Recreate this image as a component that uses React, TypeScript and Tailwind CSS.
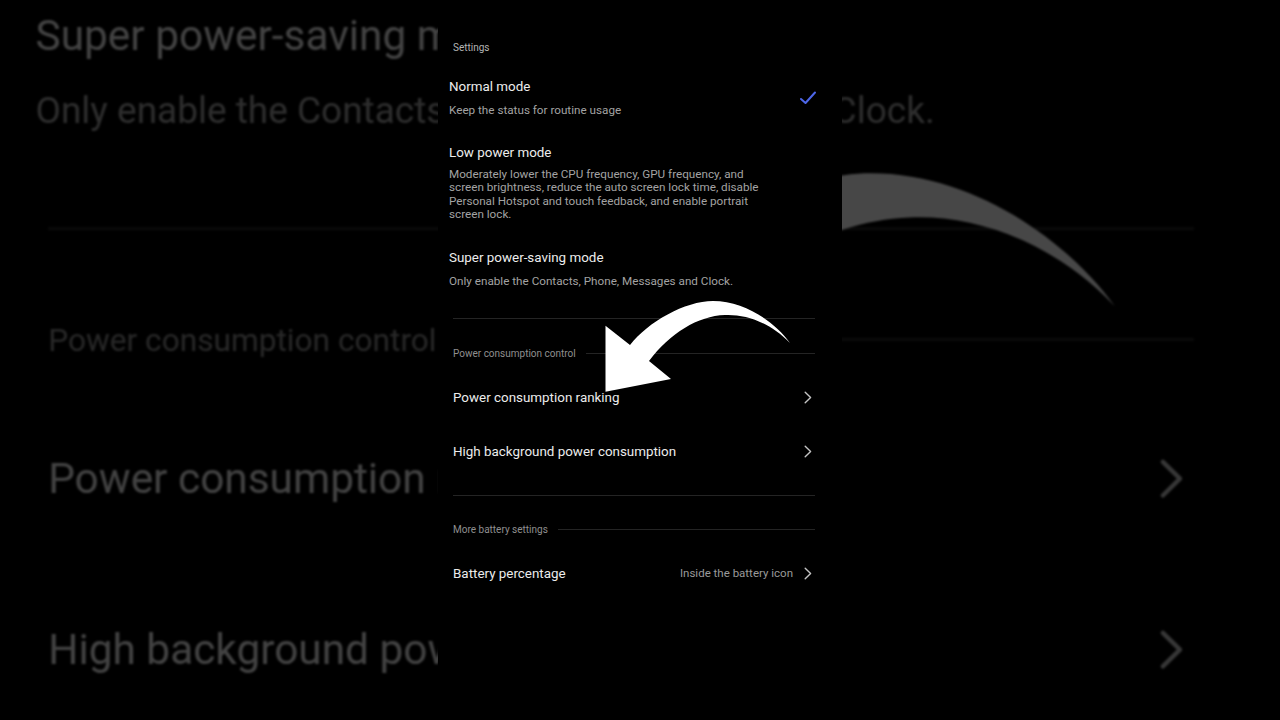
import React from 'react';

const font = { fontFamily: 'Roboto, "Noto Sans", sans-serif' };

const Chevron: React.FC = () => (
  <svg width="8" height="13" viewBox="0 0 8 13" className="shrink-0">
    <path d="M1.2 1.2 L6.6 6.5 L1.2 11.8" fill="none" stroke="#c4c4c4" strokeWidth="1.4" strokeLinecap="round" strokeLinejoin="round" />
  </svg>
);

const ModeItem: React.FC<{ title: string; children: React.ReactNode; checked?: boolean; className?: string }> = ({
  title,
  children,
  checked,
  className = '',
}) => (
  <div className={`flex items-center pl-[11px] pr-[25px] ${className}`}>
    <div className="flex-1">
      <div className="h-[18px] leading-[18px] text-[13.4px] text-[#ededed] whitespace-nowrap">{title}</div>
      {children}
    </div>
    {checked && (
      <svg width="18" height="14" viewBox="0 0 18 14" className="shrink-0">
        <path d="M2 8 L6.5 12 L16 1.5" fill="none" stroke="#4d66e8" strokeWidth="2" strokeLinecap="round" strokeLinejoin="round" />
      </svg>
    )}
  </div>
);

const SectionHeader: React.FC<{ label: string; className?: string }> = ({ label, className = '' }) => (
  <div className={`flex items-center h-[14px] pl-[15px] pr-[27px] gap-[10px] ${className}`}>
    <span className="text-[10px] text-[#8f8f8f] whitespace-nowrap">{label}</span>
    <div className="flex-1 h-px bg-[#242424]" />
  </div>
);

const NavRow: React.FC<{ label: string; value?: string }> = ({ label, value }) => (
  <div className="flex items-center h-[54px] pl-[15px] pr-[30px]">
    <span className="flex-1 text-[13.4px] text-[#ececec] whitespace-nowrap">{label}</span>
    {value && <span className="text-[11.5px] text-[#9a9a9a] mr-[11px] whitespace-nowrap">{value}</span>}
    <Chevron />
  </div>
);

const Phone: React.FC = () => (
  <div className="relative w-[404px] h-[720px] bg-black flex flex-col" style={font}>
    {/* Top header */}
    <div className="mt-[41px] h-[14px] leading-[14px] pl-[15px] text-[10px] text-[#b4b4b4]">Settings</div>

    {/* Battery modes */}
    <ModeItem title="Normal mode" checked className="mt-[23px]">
      <div className="mt-[6px] h-[16px] leading-[16px] text-[11.7px] text-[#a3a3a3] whitespace-nowrap">
        Keep the status for routine usage
      </div>
    </ModeItem>
    <ModeItem title="Low power mode" className="mt-[26px]">
      <div className="mt-[6px] leading-[13.4px] text-[11.7px] text-[#a3a3a3] whitespace-nowrap">
        Moderately lower the CPU frequency, GPU frequency, and
        <br />
        screen brightness, reduce the auto screen lock time, disable
        <br />
        Personal Hotspot and touch feedback, and enable portrait
        <br />
        screen lock.
      </div>
    </ModeItem>
    <ModeItem title="Super power-saving mode" className="mt-[27px]">
      <div className="mt-[6px] h-[16px] leading-[16px] text-[11.7px] text-[#a3a3a3] whitespace-nowrap">
        Only enable the Contacts, Phone, Messages and Clock.
      </div>
    </ModeItem>

    <div className="mt-[29px] ml-[15px] mr-[27px] h-px bg-[#242424]" />

    {/* Power consumption control */}
    <SectionHeader label="Power consumption control" className="mt-[28px]" />
    <div className="mt-[10px] flex flex-col">
      <NavRow label="Power consumption ranking" />
      <NavRow label="High background power consumption" />
    </div>

    <div className="mt-[16px] ml-[15px] mr-[27px] h-px bg-[#242424]" />

    {/* More battery settings */}
    <SectionHeader label="More battery settings" className="mt-[27px]" />
    <div className="mt-[10px]">
      <NavRow label="Battery percentage" value="Inside the battery icon" />
    </div>

    {/* Curved pointer arrow overlay */}
    <svg className="absolute inset-0 pointer-events-none" width="404" height="720" viewBox="0 0 404 720">
      <path
        d="M167.5 325.7 L192 345 C210 322 247 301 275 301 C307 301 337 322 352 343 C332 322 307 314 287 315 C260 316 232 333 211 361 L233 379 L167.5 391.7 Z"
        fill="#ffffff"
      />
    </svg>
  </div>
);

export default function App() {
  return (
    <div className="relative w-[1280px] h-[720px] bg-black overflow-hidden flex justify-center">
      {/* Enlarged dimmed backdrop */}
      <div className="absolute inset-0 flex justify-center">
        <div className="scale-[3.165] origin-center brightness-[0.28] blur-[0.35px]">
          <Phone />
        </div>
      </div>
      {/* Foreground screen */}
      <div className="relative">
        <Phone />
      </div>
    </div>
  );
}
